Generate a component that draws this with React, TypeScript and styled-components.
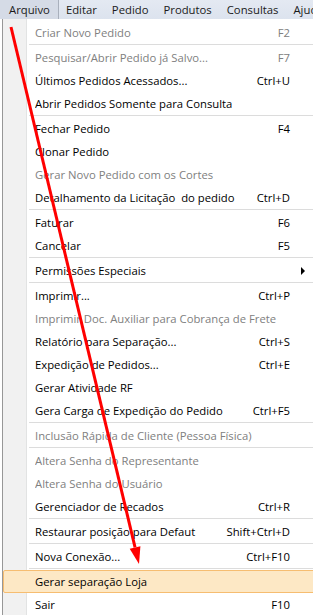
import React from 'react';
import styled, {createGlobalStyle} from 'styled-components';

const GlobalStyle = createGlobalStyle`
    html, body {
        margin: 0;
        padding: 0;
        background: #ffffff;
    }
    body {
        font-family: "Open Sans", "Noto Sans", sans-serif;
        font-size: 11.3px;
        color: #000;
    }
`

const Screen = styled.div`
    position: relative;
    width: 313px;
    height: 615px;
    overflow: hidden;
    background: #ffffff;
`

const MenuBar = styled.div`
    display: flex;
    height: 19px;
    background: linear-gradient(180deg, #e4e9f2 0%, #dce3ee 100%);
    white-space: nowrap;
`

const MenuBarItem = styled.div<{$active?: boolean}>`
    display: flex;
    align-items: center;
    padding: 0 7px;
    color: #1a1a1a;
    background: ${p => p.$active ? '#d5dbe6' : 'transparent'};
    border-right: 1px solid ${p => p.$active ? '#a9b0bc' : 'transparent'};
    &:first-child {
        padding: 0 8px 0 9px;
    }
`

const Dropdown = styled.div`
    width: 340px;
    margin-left: 2px;
    padding-top: 2px;
    border-left: 1px solid #979797;
    background: linear-gradient(90deg, #f1f1f1 0 23px, #e2e3e3 23px 24px, #ffffff 24px);
`

const Item = styled.div<{$disabled?: boolean; $hover?: boolean}>`
    display: grid;
    grid-template-columns: 1fr auto 30px;
    align-items: center;
    height: 21px;
    padding: 0 22px 0 31px;
    border: 1px solid ${p => p.$hover ? '#f6bd71' : 'transparent'};
    border-radius: 2px;
    background: ${p => p.$hover ? '#fde8c5' : 'transparent'};
    color: ${p => p.$disabled ? '#808080' : '#000000'};
    white-space: pre;
`

const Label = styled.span`
    overflow: hidden;
`

const Shortcut = styled.span`
    text-align: right;
`

const SubArrow = styled.span`
    justify-self: start;
    margin-left: 11px;
    width: 0;
    height: 0;
    border-top: 4px solid transparent;
    border-bottom: 4px solid transparent;
    border-left: 4px solid #000;
`

const Separator = styled.div`
    height: 1px;
    margin: 0 0 1px 26px;
    background: #dcdcdc;
`

const Annotation = styled.svg`
    position: absolute;
    left: 0;
    top: 0;
    pointer-events: none;
`

type Entry =
    | {sep: true}
    | {label: string; key?: string; disabled?: boolean; sub?: boolean; hover?: boolean};

const entries: Entry[] = [
    {label: 'Criar Novo Pedido', key: 'F2', disabled: true},
    {sep: true},
    {label: 'Pesquisar/Abrir Pedido já Salvo...', key: 'F7', disabled: true},
    {label: 'Últimos Pedidos Acessados...', key: 'Ctrl+U'},
    {label: 'Abrir Pedidos Somente para Consulta'},
    {sep: true},
    {label: 'Fechar Pedido', key: 'F4'},
    {label: 'Clonar Pedido'},
    {label: 'Gerar Novo Pedido com os Cortes', disabled: true},
    {label: 'Detalhamento da Licitação  do pedido', key: 'Ctrl+D'},
    {sep: true},
    {label: 'Faturar', key: 'F6'},
    {label: 'Cancelar', key: 'F5'},
    {sep: true},
    {label: 'Permissões Especiais', sub: true},
    {sep: true},
    {label: 'Imprimir...', key: 'Ctrl+P'},
    {label: 'Imprimir Doc. Auxiliar para Cobrança de Frete', disabled: true},
    {label: 'Relatório para Separação...', key: 'Ctrl+S'},
    {label: 'Expedição de Pedidos...', key: 'Ctrl+E'},
    {label: 'Gerar Atividade RF'},
    {label: 'Gera Carga de Expedição do Pedido', key: 'Ctrl+F5'},
    {sep: true},
    {label: 'Inclusão Rápida de Cliente (Pessoa Física)', disabled: true},
    {sep: true},
    {label: 'Altera Senha do Representante', disabled: true},
    {label: 'Altera Senha do Usuário', disabled: true},
    {label: 'Gerenciador de Recados', key: 'Ctrl+R'},
    {sep: true},
    {label: 'Restaurar posição para Defaut', key: 'Shift+Ctrl+D'},
    {sep: true},
    {label: 'Nova Conexão...', key: 'Ctrl+F10'},
    {sep: true},
    {label: 'Gerar separação Loja', hover: true},
    {label: 'Sair', key: 'F10'},
];

const menus = ['Arquivo', 'Editar', 'Pedido', 'Produtos', 'Consultas', 'Ajuda'];

// red arrow drawn over the screenshot
const RedArrow = () => {
    const x1 = 11, y1 = 27, tx = 139, ty = 564;
    const dx = tx - x1, dy = ty - y1;
    const len = Math.sqrt(dx * dx + dy * dy);
    const ux = dx / len, uy = dy / len;
    const bx = tx - ux * 17, by = ty - uy * 17;
    const px = -uy * 5.5, py = ux * 5.5;
    return (
        <Annotation width={313} height={615}>
            <line x1={x1} y1={y1} x2={bx} y2={by} stroke="#ff0000" strokeWidth={3}/>
            <polygon points={`${tx},${ty} ${bx + px},${by + py} ${bx - px},${by - py}`} fill="#ff0000"/>
        </Annotation>
    )
}

const App = () => {
    return (
        <Screen>
            <GlobalStyle/>
            <MenuBar>
                {menus.map((m, i) => (
                    <MenuBarItem key={m} $active={i === 0}>{m}</MenuBarItem>
                ))}
            </MenuBar>
            <Dropdown>
                {entries.map((e, i) => 'sep' in e
                    ? <Separator key={i}/>
                    : (
                        <Item key={i} $disabled={e.disabled} $hover={e.hover}>
                            <Label>{e.label}</Label>
                            <Shortcut>{e.key}</Shortcut>
                            {e.sub ? <SubArrow/> : <span/>}
                        </Item>
                    )
                )}
            </Dropdown>
            <RedArrow/>
        </Screen>
    )
};

export default App;
